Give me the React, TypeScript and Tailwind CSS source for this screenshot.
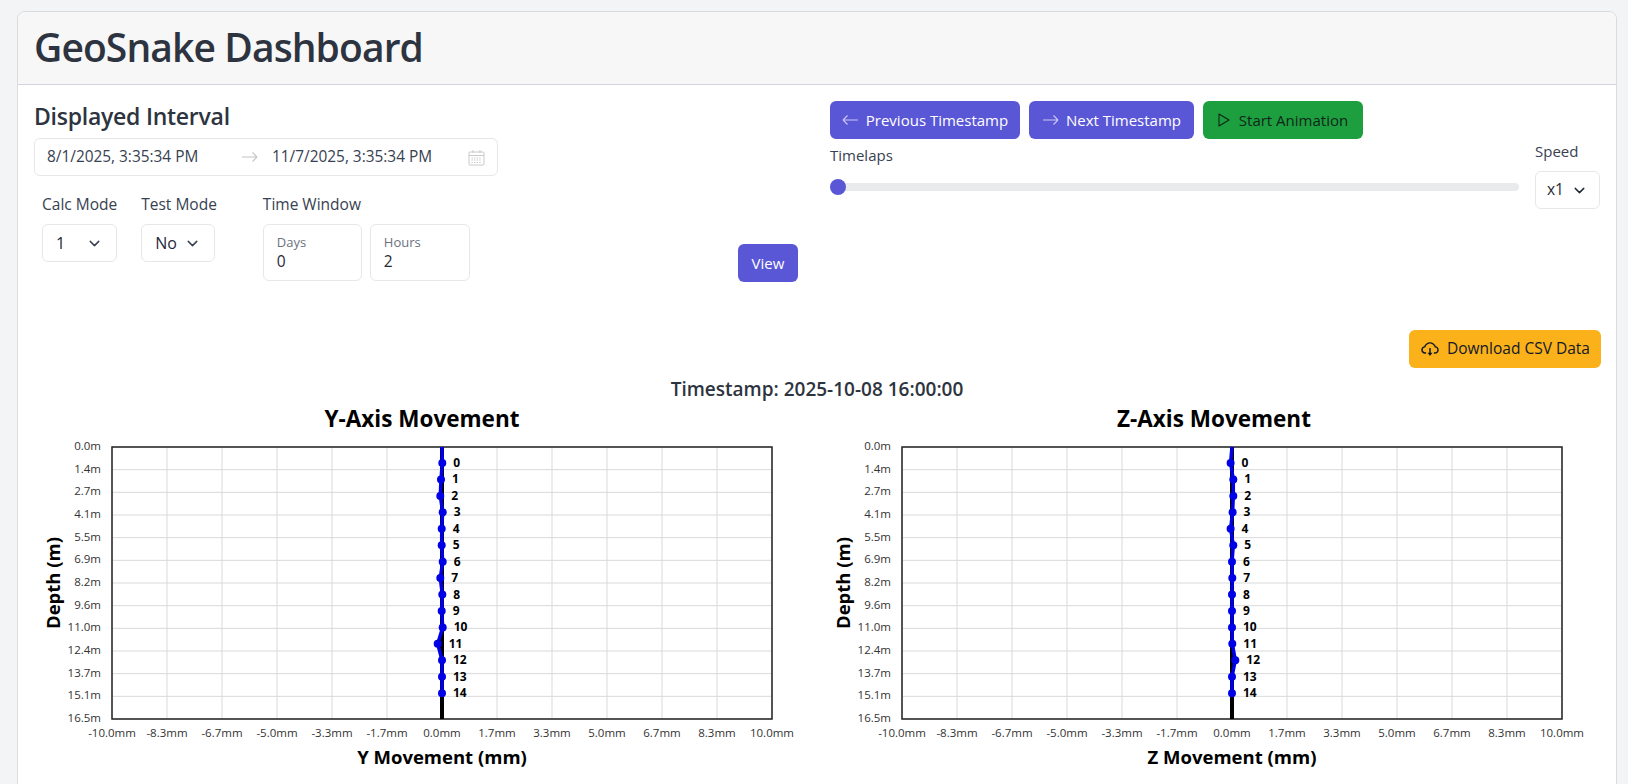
import { ChevronDown } from "lucide-react";
import { AiOutlineCloudDownload } from "react-icons/ai";

const font = "font-['Open_Sans','Noto_Sans',sans-serif]";

const xTicks = ["-10.0mm", "-8.3mm", "-6.7mm", "-5.0mm", "-3.3mm", "-1.7mm", "0.0mm", "1.7mm", "3.3mm", "5.0mm", "6.7mm", "8.3mm", "10.0mm"];
const yTicks = ["0.0m", "1.4m", "2.7m", "4.1m", "5.5m", "6.9m", "8.2m", "9.6m", "11.0m", "12.4m", "13.7m", "15.1m", "16.5m"];

// pixel offsets of each sensor from the zero line
const yOffsets = [0.3, -1, -1.7, 0.7, -0.3, -0.3, 0.7, -1.7, 0.3, -0.3, 0.7, -4.3, 0, 0, 0];
const zOffsets = [-1.4, 1.3, 1.3, 0.6, -1.4, 1.3, 0, 0.3, 0, 0, 0, 0.3, 3.3, 0, 0];

const PLOT_L = 94;
const PLOT_T = 45;
const PLOT_W = 660;
const PLOT_H = 272;

function Chart({ axis, offsets, titleShift }: { axis: string; offsets: number[]; titleShift: number }) {
  const zero = PLOT_L + PLOT_W / 2;
  const points = offsets.map((o, i) => ({ x: zero + o, y: PLOT_T + 16 + i * 16.44 }));
  return (
    <svg width="790" height="390" className="block font-['Open_Sans',sans-serif]">
      <text x={PLOT_L + PLOT_W / 2 + titleShift} y="25" textAnchor="middle" fontSize="22.5" fontWeight="700" fill="#000">
        {axis}-Axis Movement
      </text>
      <text transform={`translate(42 ${PLOT_T + PLOT_H / 2}) rotate(-90)`} textAnchor="middle" fontSize="18.5" fontWeight="700" fill="#000">
        Depth (m)
      </text>
      {xTicks.map((t, i) => {
        const x = PLOT_L + (i * PLOT_W) / 12;
        return (
          <g key={t}>
            <line x1={x} x2={x} y1={PLOT_T} y2={PLOT_T + PLOT_H} stroke="#d9d9d9" />
            <text x={x} y={PLOT_T + PLOT_H + 18} textAnchor="middle" fontSize="11.5" fill="#333">{t}</text>
          </g>
        );
      })}
      {yTicks.map((t, i) => {
        const y = PLOT_T + (i * PLOT_H) / 12;
        return (
          <g key={t}>
            <line x1={PLOT_L} x2={PLOT_L + PLOT_W} y1={y} y2={y} stroke="#d9d9d9" />
            <text x={PLOT_L - 11} y={y + 3} textAnchor="end" fontSize="11.5" fill="#333">{t}</text>
          </g>
        );
      })}
      <rect x={PLOT_L} y={PLOT_T} width={PLOT_W} height={PLOT_H} fill="none" stroke="#222" strokeWidth="1.5" />
      <line x1={zero} x2={zero} y1={PLOT_T} y2={PLOT_T + PLOT_H} stroke="#000" strokeWidth="4" />
      <polyline
        points={[`${zero},${PLOT_T}`, ...points.map((p) => `${p.x},${p.y}`)].join(" ")}
        fill="none"
        stroke="#0000e6"
        strokeWidth="3.5"
      />
      {points.map((p, i) => (
        <g key={i}>
          <circle cx={p.x} cy={p.y} r="4" fill="#0000e6" />
          <text x={p.x + 11} y={p.y + 4} fontSize="12" fontWeight="700" fill="#000">{i}</text>
        </g>
      ))}
      <text x={PLOT_L + PLOT_W / 2} y={PLOT_T + PLOT_H + 45} textAnchor="middle" fontSize="18.5" fontWeight="700" fill="#000">
        {axis} Movement (mm)
      </text>
    </svg>
  );
}

function ThinArrow({ dir, className }: { dir: "left" | "right"; className: string }) {
  const d = dir === "left" ? "M1 8h15M1 8l4.5-4.5M1 8l4.5 4.5" : "M1 8h15M16 8l-4.5-4.5M16 8l-4.5 4.5";
  return (
    <svg width="17" height="16" viewBox="0 0 17 16" fill="none" stroke="currentColor" strokeWidth="1.1" className={className}>
      <path d={d} />
    </svg>
  );
}

function CalendarGrid() {
  return (
    <svg width="17" height="17" viewBox="0 0 17 17" fill="none" stroke="#c9c9c9" strokeWidth="1">
      <rect x="1" y="3" width="15" height="13" rx="1" />
      <path d="M1 6.5h15M5 1v3M12 1v3" />
      <path d="M3.5 9h10M3.5 11h10M3.5 13.5h10" strokeDasharray="1.4 1.2" />
    </svg>
  );
}

function SelectBox({ label, value, width }: { label: string; value: string; width: string }) {
  return (
    <div>
      <div className="mb-[10px] text-[15.5px] leading-[20px] text-[#374151]">{label}</div>
      <div className={`flex h-[38px] items-center justify-between rounded-md border border-[#e5e7eb] px-[13px] text-[16px] text-[#1f2937] ${width}`}>
        <span>{value}</span>
        <ChevronDown size={17} strokeWidth={2} className="text-[#374151]" />
      </div>
    </div>
  );
}

function NumberBox({ label, value, width }: { label: string; value: string; width: string }) {
  return (
    <div className={`h-[57px] rounded-md border border-[#e5e7eb] px-[13px] pt-[9px] ${width}`}>
      <div className="text-[13px] leading-[17px] text-[#6b7280]">{label}</div>
      <div className="text-[15.5px] leading-[20px] text-[#1f2937]">{value}</div>
    </div>
  );
}

export default function App() {
  return (
    <div className={`h-[784px] overflow-hidden bg-[#f3f4f6] pl-[17px] pr-[11px] pt-[11px] ${font}`}>
      <div className="h-[800px] rounded-lg border border-[#d9dbdf] bg-white">
        <div className="flex h-[73px] items-center rounded-t-lg border-b border-[#d1d5db] bg-[#f7f7f8] px-[16px] pb-[3px]">
          <h1 className="text-[39px] font-semibold leading-none tracking-[-0.9px] text-[#2d3440]">GeoSnake Dashboard</h1>
        </div>

        <div className="flex px-[16px] pt-[16px]">
          <div className="w-[796px] shrink-0">
            <h2 className="mt-[-1px] text-[23px] font-semibold leading-[32px] tracking-[-0.25px] text-[#2d3440]">Displayed Interval</h2>
            <div className="mt-[6px] flex h-[38px] w-[464px] items-center rounded-md border border-[#e5e7eb] pl-[12px] pr-[12px] text-[15.4px] text-[#374151]">
              <span className="w-[194px]">8/1/2025, 3:35:34 PM</span>
              <ThinArrow dir="right" className="text-[#c4c4c4]" />
              <span className="ml-[14px] flex-1">11/7/2025, 3:35:34 PM</span>
              <CalendarGrid />
            </div>
            <div className="mt-[18px] flex items-start">
              <div className="ml-[8px] flex gap-[24px]">
                <SelectBox label="Calc Mode" value="1" width="w-[75px]" />
                <SelectBox label="Test Mode" value="No" width="w-[74px]" />
              </div>
              <div className="ml-[46px]">
                <div className="mb-[10px] text-[15.5px] leading-[20px] text-[#374151]">Time Window</div>
                <div className="flex gap-[8px]">
                  <NumberBox label="Days" value="0" width="w-[99px]" />
                  <NumberBox label="Hours" value="2" width="w-[100px]" />
                </div>
              </div>
              <button className="ml-auto mr-[32px] mt-[50px] h-[38px] w-[60px] rounded-md bg-[#5a57d6] text-[15px] text-white">View</button>
            </div>
          </div>

          <div className="min-w-0 flex-1">
            <div className="flex gap-[9px]">
              <button className="flex h-[38px] w-[190px] items-center justify-center gap-[7px] rounded-md bg-[#5a57d6] text-[15px] text-white">
                <ThinArrow dir="left" className="text-[#c9c8f4]" /> Previous Timestamp
              </button>
              <button className="flex h-[38px] w-[165px] items-center justify-center gap-[7px] rounded-md bg-[#5a57d6] text-[15px] text-white">
                <ThinArrow dir="right" className="text-[#c9c8f4]" /> Next Timestamp
              </button>
              <button className="flex h-[38px] w-[160px] items-center justify-center gap-[9px] rounded-md bg-[#1d9f3f] text-[15px] text-[#10261a]">
                <svg width="12" height="14" viewBox="0 0 12 14" fill="none" stroke="currentColor" strokeWidth="1.1">
                  <path d="M1 1v12l10-6z" strokeLinejoin="round" />
                </svg>
                Start Animation
              </button>
            </div>
            <div className="flex">
              <div className="flex-1">
                <div className="mt-[6px] text-[15px] leading-[20px] text-[#374151]">Timelaps</div>
                <div className="relative mt-[18px] h-[8px] w-[689px] rounded-full bg-[#e9eaec]">
                  <div className="absolute left-0 top-[-4px] h-[16px] w-[16px] rounded-full bg-[#5a57d6]" />
                </div>
              </div>
              <div className="w-[65px]">
                <div className="mb-[10px] mt-[2px] text-[15px] leading-[20px] text-[#374151]">Speed</div>
                <div className="flex h-[38px] items-center justify-between rounded-md border border-[#e5e7eb] px-[11px] text-[15.5px] text-[#1f2937]">
                  <span>x1</span>
                  <ChevronDown size={17} strokeWidth={2} />
                </div>
              </div>
            </div>
          </div>
        </div>

        <div className="mr-[15px] mt-[48px] flex justify-end">
          <button className="flex h-[38px] w-[192px] items-center justify-center gap-[7px] rounded-md bg-[#fab11a] text-[15.5px] text-[#111827]">
            <AiOutlineCloudDownload size={20} /> Download CSV Data
          </button>
        </div>
        <div className="mt-[9px] text-center text-[19px] font-semibold leading-[24px] text-[#2d3440]">Timestamp: 2025-10-08 16:00:00</div>
        <div className="mt-[1px] flex">
          <Chart axis="Y" offsets={yOffsets} titleShift={-20} />
          <Chart axis="Z" offsets={zOffsets} titleShift={-18} />
        </div>
      </div>
    </div>
  );
}
